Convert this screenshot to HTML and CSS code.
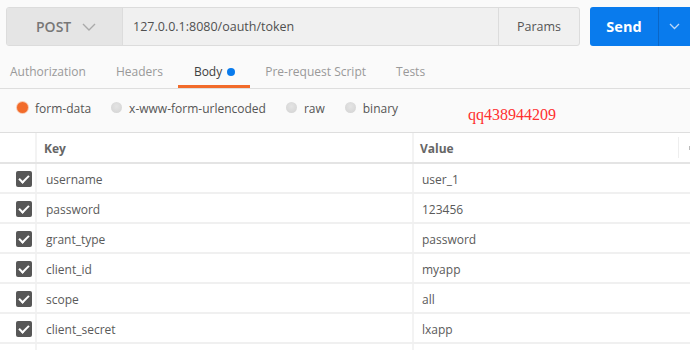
FILE: index.html
```html
<!DOCTYPE html>
<html>
<head>
<meta charset="utf-8">
<link rel="stylesheet" href="styles.css">
</head>
<body>
<div class="app">
  <div class="bar">
    <div class="reqbox">
      <div class="method">POST
        <svg class="chev" width="14" height="8" viewBox="0 0 14 8"><path d="M1 1 L7 7 L13 1" fill="none" stroke="#aaa" stroke-width="1.4"/></svg>
      </div>
      <div class="url">127.0.0.1:8080/oauth/token</div>
      <div class="params">Params</div>
    </div>
    <div class="send">
      <div class="send-main">Send</div>
      <div class="send-drop">
        <svg width="11" height="7" viewBox="0 0 11 7"><path d="M1 1 L5.5 5.5 L10 1" fill="none" stroke="#bcd7f7" stroke-width="1.3"/></svg>
      </div>
    </div>
  </div>
  <div class="tabs">
    <div class="tab">Authorization</div>
    <div class="tab">Headers</div>
    <div class="tab active">Body <span class="dot"></span></div>
    <div class="tab">Pre-request Script</div>
    <div class="tab">Tests</div>
  </div>
  <div class="modes">
    <div class="mode"><span class="radio on"></span>form-data</div>
    <div class="mode"><span class="radio"></span>x-www-form-urlencoded</div>
    <div class="mode"><span class="radio"></span>raw</div>
    <div class="mode"><span class="radio"></span>binary</div>
    <div class="qq">qq438944209</div>
  </div>
  <div class="table">
    <div class="row head">
      <div class="c0"></div>
      <div class="c1">Key</div>
      <div class="c2">Value<span class="hmore"></span></div>
    </div>
    <div class="row"><div class="c0"><span class="cb"></span></div><div class="c1">username</div><div class="c2">user_1</div></div>
    <div class="row"><div class="c0"><span class="cb"></span></div><div class="c1">password</div><div class="c2">123456</div></div>
    <div class="row"><div class="c0"><span class="cb"></span></div><div class="c1">grant_type</div><div class="c2">password</div></div>
    <div class="row"><div class="c0"><span class="cb"></span></div><div class="c1">client_id</div><div class="c2">myapp</div></div>
    <div class="row"><div class="c0"><span class="cb"></span></div><div class="c1">scope</div><div class="c2">all</div></div>
    <div class="row"><div class="c0"><span class="cb"></span></div><div class="c1">client_secret</div><div class="c2">lxapp</div></div>
    <div class="row last"><div class="c0"></div><div class="c1"></div><div class="c2"></div></div>
  </div>
</div>
</body>
</html>
```
FILE: styles.css
```css
* { box-sizing: border-box; }
html, body { margin: 0; padding: 0; }
body {
  width: 690px; height: 350px; overflow: hidden;
  background: #fafafa;
  font-family: "Open Sans", "Liberation Sans", sans-serif;
  font-size: 12px; color: #555;
}
.app { height: 350px; overflow: hidden; }
.bar { display: flex; padding: 7px 0 0 6px; height: 46px; }
.reqbox {
  display: flex; width: 574px; height: 39px;
  border: 1px solid #dcdcdc; border-radius: 3px; background: #f0f0f0;
  overflow: hidden;
}
.method {
  width: 116px; display: flex; align-items: center; padding-left: 29px;
  background: #e5e5e5; border-right: 1px solid #dcdcdc;
  font-size: 14px; font-weight: 600; color: #777;
}
.chev { margin-left: 11px; margin-top: 1px; }
.url { flex: 1; display: flex; align-items: center; padding-left: 10px; color: #505050; font-size: 12.5px; }
.params {
  width: 81px; display: flex; align-items: center; justify-content: center;
  border-left: 1px solid #dcdcdc; color: #555; font-size: 12.5px;
}
.send {
  margin-left: 10px; display: flex; width: 100px; height: 39px;
  background: #097bed; border-radius: 3px 0 0 3px; color: #fff;
}
.send-main {
  width: 69px; display: flex; align-items: center; justify-content: center;
  font-weight: 700; font-size: 14.5px; border-right: 1px solid #0a66c7;
}
.send-drop { flex: 1; display: flex; align-items: center; justify-content: center; }
.tabs {
  display: flex; height: 43px; border-bottom: 1px solid #dedede;
  padding-left: 10px; align-items: stretch;
}
.tab {
  display: flex; align-items: center; color: #999; font-size: 12px;
  margin-right: 30px; padding-top: 8px;
}
.tab:nth-child(2) { margin-right: 15px; }
.tab.active {
  color: #404040; padding-left: 16px; padding-right: 15px; margin-right: 15px;
  border-bottom: 3px solid #f26b2a; padding-top: 11px;
}
.dot { width: 8px; height: 8px; border-radius: 50%; background: #097bed; margin-left: 5px; margin-top: 1px; }
.modes { display: flex; align-items: center; height: 43px; padding-left: 17px; position: relative; padding-bottom: 4px; }
.mode { display: flex; align-items: center; font-size: 12px; color: #555; margin-right: 20px; }
.radio {
  width: 11px; height: 11px; border-radius: 50%; margin-right: 7px; margin-top: -3px;
  background: radial-gradient(circle at 50% 40%, #e4e4e4, #d2d2d2);
}
.radio.on { background: #f26b2a; box-shadow: 0 0 0 1px #f8c9b0; }
.qq {
  position: absolute; left: 468px; top: 17px;
  font-family: "Liberation Serif", serif; font-size: 16px; color: #ff3030;
}
.table { border-top: 1px solid #dedede; }
.row {
  display: grid; grid-template-columns: 37px 377px 1fr; height: 30px;
  border-bottom: 2px solid #f0f0f0; background: #fff;
}
.row > div { display: flex; align-items: center; }
.row .c1, .row .c2 { padding-top: 3px; }
.c0 { justify-content: center; padding-left: 12px; border-right: 2px solid #f3f3f3; }
.c1 { padding-left: 9px; border-right: 2px solid #f3f3f3; color: #5a5a5a; }
.c2 { padding-left: 8px; color: #5a5a5a; position: relative; }
.row.head { height: 31px; border-bottom: 2px solid #e4e4e4; }
.row.head .c1, .row.head .c2 { font-weight: 700; color: #666; padding-left: 7px; padding-top: 2px; }
.row.head .c2 { padding-left: 6px; }
.hmore { position: absolute; right: 11px; top: 4px; bottom: 4px; border-left: 1px solid #eee; width: 1px; }
.hmore::after { content: ""; position: absolute; left: 10px; top: 9px; width: 2px; height: 4px; background: #bbb; }
.cb {
  width: 16px; height: 16px; border-radius: 2px; background: #575757; position: relative; margin-top: 1px;
}
.cb::after {
  content: ""; position: absolute; left: 5px; top: 2px; width: 4px; height: 8px;
  border: solid #fff; border-width: 0 2px 2px 0; transform: rotate(45deg);
}
```
